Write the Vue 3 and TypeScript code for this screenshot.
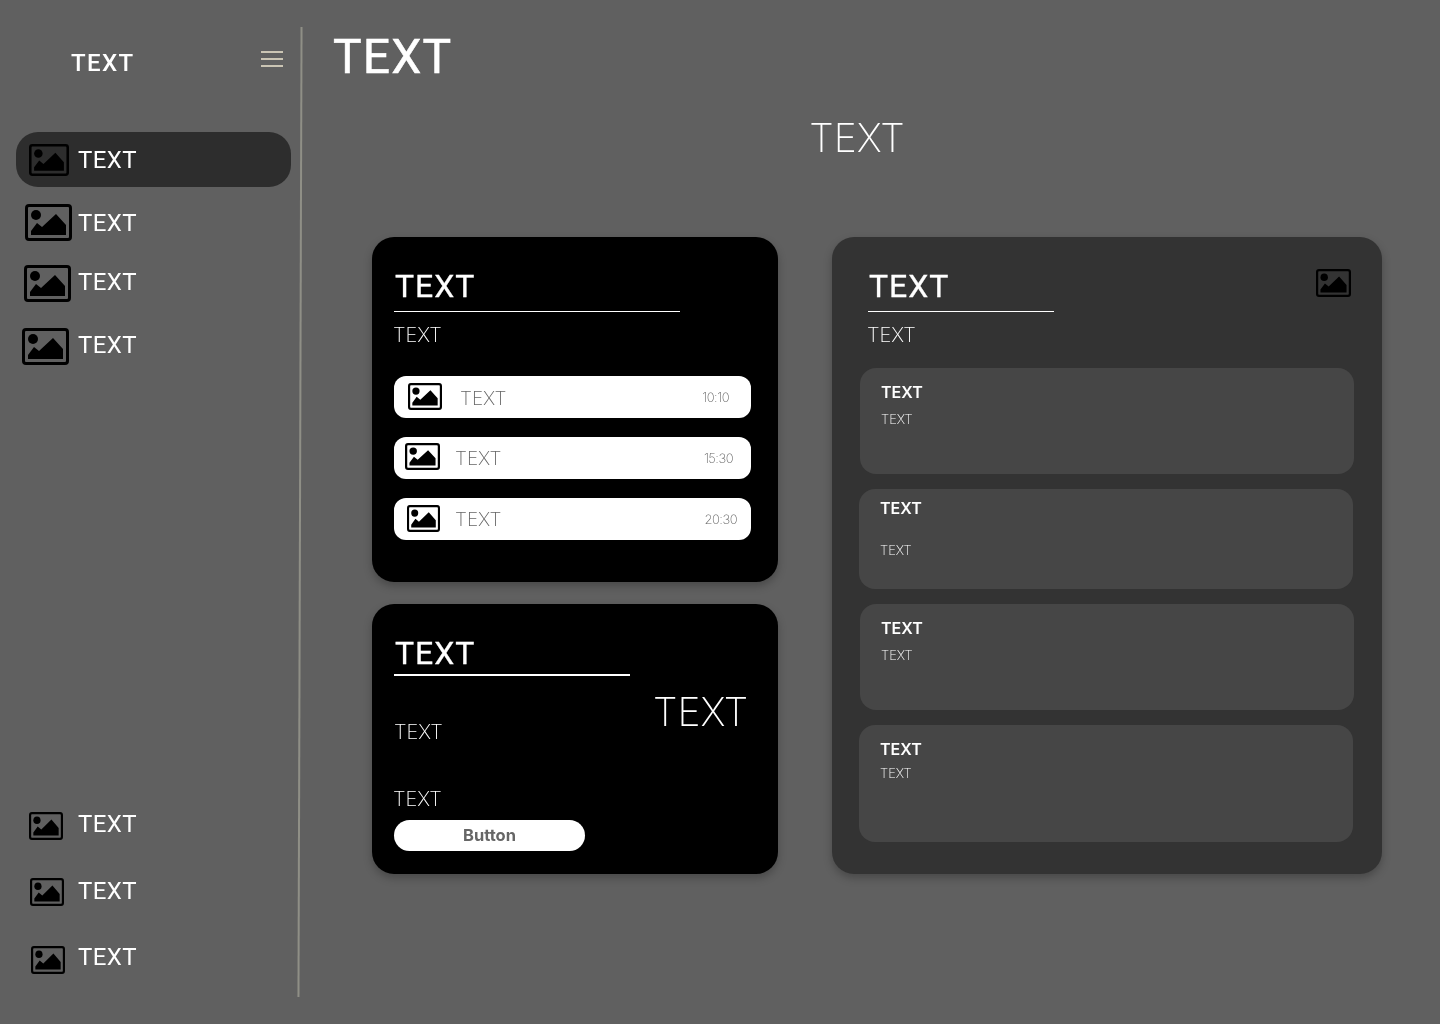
<script setup lang="ts">
interface NavItem {
  x: number;
  w: number;
  h: number;
  top: number;
  shift: number;
  active?: boolean;
}

const topNav: NavItem[] = [
  { x: 13, w: 40, h: 32, top: 0, shift: 2, active: true },
  { x: 9, w: 47, h: 37, top: 17, shift: 2 },
  { x: 8, w: 47, h: 37, top: 24, shift: 6 },
  { x: 6, w: 47, h: 37, top: 26, shift: 6 },
];

const bottomNav: NavItem[] = [
  { x: 13, w: 34, h: 28, top: 0, shift: 7 },
  { x: 14, w: 34, h: 28, top: 38, shift: 5 },
  { x: 15, w: 34, h: 28, top: 40, shift: 9 },
];

const rows = [
  { icon: 14, w: 34, up: 1, text: 18, lift: 0, time: "10:10", right: 22 },
  { icon: 11, w: 35, up: 3, text: 15, lift: 2, time: "15:30", right: 18 },
  { icon: 13, w: 33, up: 1, text: 15, lift: 2, time: "20:30", right: 14 },
];

const notes = [
  { x: 28, h: 106, px: 21, pt: 14, gap: 9 },
  { x: 27, h: 100, px: 21, pt: 9, gap: 24 },
  { x: 28, h: 106, px: 21, pt: 14, gap: 9 },
  { x: 27, h: 117, px: 21, pt: 14, gap: 6 },
];
</script>

<template>
  <div class="app">
    <aside class="sidebar">
      <header class="side-head">
        <span class="brand">TEXT</span>
        <svg class="menu" viewBox="0 0 22 16" aria-hidden="true">
          <path d="M0 1h22M0 8h22M0 15h22" />
        </svg>
      </header>

      <nav class="nav">
        <a
          v-for="(item, i) in topNav"
          :key="i"
          class="nav-item"
          :class="{ active: item.active }"
          :style="{ marginTop: item.top + 'px', height: item.active ? undefined : item.h + 'px' }"
        >
          <svg
            class="pic"
            :style="{ width: item.w + 'px', height: item.h + 'px', marginLeft: item.x + 'px' }"
            viewBox="0 0 47 37"
            preserveAspectRatio="none"
            aria-hidden="true"
          >
            <rect x="1.5" y="1.5" width="44" height="34" rx="2.5" />
            <circle cx="11" cy="11" r="5" />
            <polygon points="6,31 6,27 12,19 17,23 31,10 41,21 41,31" />
          </svg>
          <span class="nav-label" :style="{ marginBottom: item.shift + 'px' }">TEXT</span>
        </a>
      </nav>

      <nav class="nav nav-bottom">
        <a
          v-for="(item, i) in bottomNav"
          :key="i"
          class="nav-item"
          :style="{ marginTop: item.top + 'px', height: item.h + 'px' }"
        >
          <svg
            class="pic"
            :style="{ width: item.w + 'px', height: item.h + 'px', marginLeft: item.x + 'px' }"
            viewBox="0 0 47 37"
            preserveAspectRatio="none"
            aria-hidden="true"
          >
            <rect x="1.5" y="1.5" width="44" height="34" rx="2.5" />
            <circle cx="11" cy="11" r="5" />
            <polygon points="6,31 6,27 12,19 17,23 31,10 41,21 41,31" />
          </svg>
          <span class="nav-label" :style="{ marginBottom: item.shift + 'px' }">TEXT</span>
        </a>
      </nav>
    </aside>

    <div class="divider"></div>

    <main class="main">
      <h1 class="page-title">TEXT</h1>
      <p class="hero">TEXT</p>

      <div class="board">
        <div class="col">
          <section class="card card-schedule">
            <h2 class="card-title wide">TEXT</h2>
            <p class="card-sub">TEXT</p>
            <ul class="rows">
              <li v-for="row in rows" :key="row.time" class="row">
                <svg
                  class="pic pic-row"
                  :style="{ width: row.w + 'px', marginLeft: row.icon + 'px', marginBottom: row.up + 'px' }"
                  viewBox="0 0 47 37"
                  preserveAspectRatio="none"
                  aria-hidden="true"
                >
                  <rect x="1.5" y="1.5" width="44" height="34" rx="2.5" />
                  <circle cx="11" cy="11" r="5" />
                  <polygon points="6,31 6,27 12,19 17,23 31,10 41,21 41,31" />
                </svg>
                <span
                  class="row-label"
                  :style="{ marginLeft: row.text + 'px', marginBottom: row.lift + 'px' }"
                >TEXT</span>
                <span class="row-time" :style="{ marginRight: row.right + 'px' }">{{ row.time }}</span>
              </li>
            </ul>
          </section>

          <section class="card card-action">
            <div class="action-left">
              <h2 class="card-title narrow">TEXT</h2>
              <p class="action-a">TEXT</p>
              <p class="action-b">TEXT</p>
              <button type="button" class="btn">Button</button>
            </div>
            <p class="action-big">TEXT</p>
          </section>
        </div>

        <section class="card card-notes">
          <div class="notes-head">
            <div>
              <h2 class="card-title short">TEXT</h2>
              <p class="card-sub">TEXT</p>
            </div>
            <svg class="pic pic-head" viewBox="0 0 47 37" preserveAspectRatio="none" aria-hidden="true">
              <rect x="1.5" y="1.5" width="44" height="34" rx="2.5" />
              <circle cx="11" cy="11" r="5" />
              <polygon points="6,31 6,27 12,19 17,23 31,10 41,21 41,31" />
            </svg>
          </div>
          <div class="notes">
            <article
              v-for="(n, i) in notes"
              :key="i"
              class="note"
              :style="{ marginLeft: n.x + 'px', height: n.h + 'px', padding: n.pt + 'px ' + n.px + 'px 0' }"
            >
              <h3 class="note-title">TEXT</h3>
              <p class="note-sub" :style="{ marginTop: n.gap + 'px' }">TEXT</p>
            </article>
          </div>
        </section>
      </div>
    </main>
  </div>
</template>

<style>
html,
body {
  margin: 0;
  background: #606060;
}
</style>

<style scoped>
.app {
  display: flex;
  width: 1440px;
  height: 1024px;
  overflow: hidden;
  color: #fff;
  font-family: Inter, "Liberation Sans", sans-serif;
  will-change: transform;
}

p,
h1,
h2,
h3,
ul {
  margin: 0;
  padding: 0;
}

.sidebar {
  width: 299px;
  flex: none;
  display: flex;
  flex-direction: column;
  padding: 45px 0 50px;
  box-sizing: border-box;
}

.side-head {
  display: flex;
  align-items: center;
  justify-content: space-between;
  height: 34px;
  padding: 0 16px 0 71px;
}

.brand {
  margin-top: 1px;
  font-family: Roboto, sans-serif;
  font-size: 24px;
  font-weight: 500;
  line-height: 34px;
  letter-spacing: 1.4px;
}

.menu {
  width: 22px;
  height: 16px;
  margin-top: -6px;
}

.menu path {
  stroke: #eee6d0;
  stroke-width: 1.6;
  fill: none;
}

.nav {
  display: flex;
  flex-direction: column;
  margin: 53px 0 0 16px;
  width: 275px;
}

.nav-bottom {
  margin-top: auto;
}

.nav-item {
  display: grid;
  grid-template-columns: 62px 1fr;
  align-items: center;
}

.nav-item.active {
  height: 55px;
  border-radius: 22px;
  background: #2d2d2d;
}

.nav-label {
  margin-top: 2px;
  font-family: Roboto, sans-serif;
  font-size: 24px;
  line-height: 16px;
  font-weight: 400;
  letter-spacing: 0.4px;
}

.pic {
  display: block;
}

.pic rect {
  fill: none;
  stroke: #000;
  stroke-width: 3;
}

.pic circle,
.pic polygon {
  fill: #000;
}

.divider {
  width: 2px;
  flex: none;
  height: 970px;
  margin-top: 27px;
  background: #8f8f86;
  transform: rotate(0.18deg);
}

.main {
  flex: 1;
  padding-left: 71px;
}

.page-title {
  margin: 29px 0 0 -39px;
  font-family: Roboto, sans-serif;
  font-size: 48px;
  line-height: 56px;
  font-weight: 400;
  letter-spacing: 1.2px;
  -webkit-text-stroke: 0.5px #fff;
}

.hero {
  width: 970px;
  margin-top: 29px;
  text-align: center;
  font-size: 39px;
  line-height: 48px;
  font-weight: 200;
}

.board {
  display: grid;
  grid-template-columns: 406px 550px;
  column-gap: 54px;
  margin-top: 75px;
}

.col {
  display: flex;
  flex-direction: column;
  gap: 22px;
}

.card {
  box-sizing: border-box;
  border-radius: 22px;
  background: #000;
  box-shadow: 0 4px 8px rgba(0, 0, 0, 0.25);
}

.card-schedule {
  height: 345px;
  padding: 29px 0 0 22px;
}

.card-title {
  box-sizing: border-box;
  padding-left: 1px;
  font-family: Roboto, sans-serif;
  font-size: 32px;
  line-height: 40px;
  font-weight: 400;
  letter-spacing: 1px;
  height: 46px;
  border-bottom: 1px solid #fff;
  -webkit-text-stroke: 0.3px #fff;
}

.card-title.wide {
  width: 286px;
}

.card-title.narrow {
  width: 236px;
  height: 43px;
  border-bottom-width: 2px;
}

.card-title.short {
  width: 186px;
}

.card-sub {
  margin: 11px 0 0 -1px;
  font-size: 20px;
  line-height: 24px;
  font-weight: 200;
}

.rows {
  list-style: none;
  display: flex;
  flex-direction: column;
  gap: 19px;
  width: 357px;
  margin-top: 29px;
}

.row {
  display: flex;
  align-items: center;
  height: 42px;
  border-radius: 12px;
  background: #fff;
  color: #666;
}

.pic-row {
  height: 27px;
}

.row-label {
  font-size: 19px;
  font-weight: 200;
  line-height: 24px;
  margin-top: 3px;
}

.row-time {
  margin-left: auto;
  font-size: 13px;
  font-weight: 200;
  letter-spacing: -0.5px;
}

.card-action {
  display: flex;
  height: 270px;
  padding: 29px 0 0 22px;
}

.action-left {
  width: 236px;
}

.action-a {
  margin: 44px 0 0;
  font-size: 20px;
  line-height: 24px;
  font-weight: 200;
}

.action-b {
  margin: 43px 0 0 -1px;
  font-size: 20px;
  line-height: 24px;
  font-weight: 200;
}

.btn {
  display: block;
  width: 191px;
  height: 31px;
  margin-top: 9px;
  padding: 0 0 2px;
  border: none;
  border-radius: 16px;
  background: #fff;
  color: #666;
  font: 700 16.5px Inter, "Liberation Sans", sans-serif;
}

.action-big {
  margin: 55px 0 0 23px;
  font-size: 39px;
  line-height: 48px;
  font-weight: 200;
}

.card-notes {
  height: 637px;
  background: #333;
}

.notes-head {
  display: flex;
  justify-content: space-between;
  padding: 29px 31px 0 36px;
}

.pic-head {
  width: 35px;
  height: 28px;
  margin-top: 3px;
}

.notes {
  display: flex;
  flex-direction: column;
  gap: 15px;
  margin-top: 21px;
}

.note {
  box-sizing: border-box;
  width: 494px;
  border-radius: 16px;
  background: #464646;
}

.note-title {
  font-size: 16px;
  line-height: 20px;
  font-weight: 600;
}

.note-sub {
  font-size: 13px;
  line-height: 16px;
  font-weight: 200;
}
</style>
